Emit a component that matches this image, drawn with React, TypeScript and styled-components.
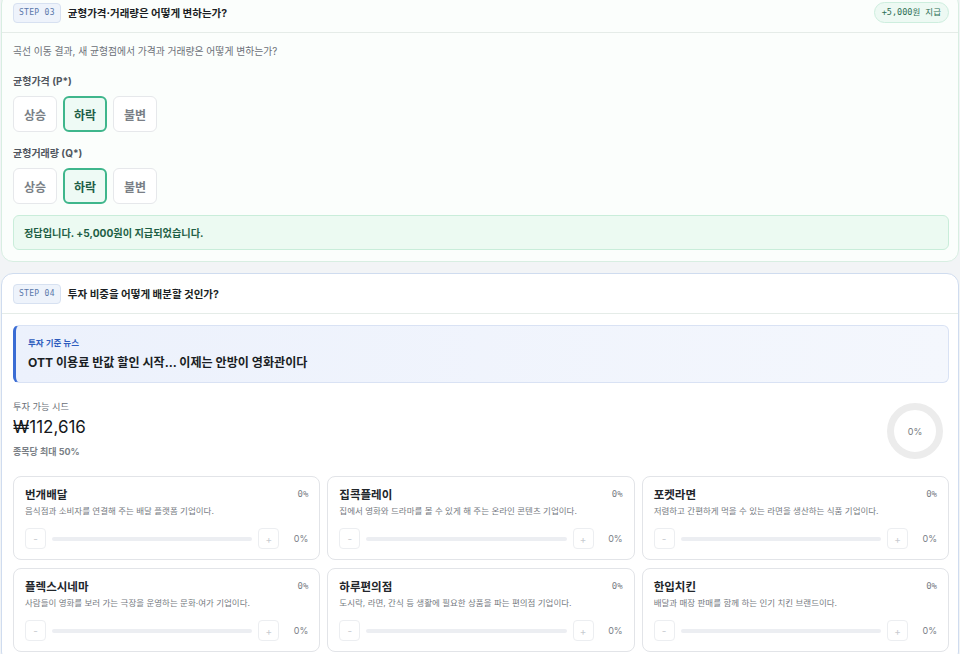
import styled, { createGlobalStyle, css } from "styled-components";

const GlobalStyle = createGlobalStyle`
  html { overflow: hidden; }
  body {
    margin: 0;
    background: #f2f4f6;
    font-family: Inter, "Noto Sans CJK KR", "Noto Sans", sans-serif;
    color: #1f2329;
  }
`;

const mono = `"DejaVu Sans Mono", "Liberation Mono", "Noto Sans CJK KR", monospace`;

const Page = styled.div`
  display: flex;
  flex-direction: column;
  gap: 11px;
  padding: 0 1px;
  margin-top: -8px;
`;

const Card = styled.section<{ $tone: "done" | "active" }>`
  border-radius: 12px;
  border: 1px solid;
  ${(p) =>
    p.$tone === "done"
      ? css`
          background: #fbfefc;
          border-color: #d8eee2;
        `
      : css`
          background: #ffffff;
          border-color: #cfdcef;
        `}
`;

const Header = styled.header`
  height: 40px;
  box-sizing: border-box;
  display: flex;
  align-items: center;
  gap: 7px;
  padding: 0 9px 0 11px;
  border-bottom: 1px solid #e5ece8;
`;

const StepBadge = styled.span`
  font-family: ${mono};
  font-size: 8px;
  letter-spacing: 0.3px;
  color: #5a78aa;
  background: #eef3fb;
  border: 1px solid #d7e1f1;
  border-radius: 4px;
  padding: 4px 5px;
  line-height: 10px;
`;

const Title = styled.h2`
  margin: 0;
  font-size: 10.5px;
  font-weight: 700;
  color: #1b1f24;
  flex: 1;
`;

const RewardPill = styled.span`
  font-family: ${mono};
  font-size: 8.5px;
  color: #2e6f55;
  background: #edf9f3;
  border: 1px solid #cdeede;
  border-radius: 999px;
  padding: 4px 7px;
  line-height: 11px;
`;

const Body = styled.div`
  padding: 11px 9px 11px 11px;
  display: flex;
  flex-direction: column;
`;

const Question = styled.p`
  margin: 0;
  font-size: 9.8px;
  line-height: 16px;
  color: #6b7078;
`;

const Field = styled.div`
  display: flex;
  flex-direction: column;
  gap: 8px;
  margin-top: 14px;
`;

const FieldLabel = styled.div`
  font-size: 10px;
  font-weight: 700;
  line-height: 14px;
  color: #50565e;
`;

const Choices = styled.div`
  display: flex;
  gap: 6px;
`;

const Choice = styled.button<{ $selected?: boolean }>`
  width: 44px;
  height: 36px;
  box-sizing: border-box;
  border-radius: 6px;
  font-family: inherit;
  font-size: 12px;
  font-weight: 600;
  padding: 0;
  background: #ffffff;
  border: 1px solid #e6e8eb;
  color: #7a7f86;
  ${(p) =>
    p.$selected &&
    css`
      background: #eefaf5;
      border: 2px solid #3fb68c;
      color: #1e5e45;
      font-weight: 700;
    `}
`;

const Notice = styled.div`
  margin-top: 11px;
  height: 35px;
  box-sizing: border-box;
  display: flex;
  align-items: center;
  padding: 0 10px;
  background: #ecfaf2;
  border: 1px solid #c9edda;
  border-radius: 6px;
  font-size: 10.2px;
  font-weight: 700;
  color: #1e5f45;
`;

const News = styled.div`
  height: 58px;
  box-sizing: border-box;
  display: flex;
  flex-direction: column;
  justify-content: center;
  gap: 6px;
  padding: 0 12px;
  background: linear-gradient(90deg, #ecf1fc, #f4f7fd);
  border: 1px solid #d9e2f4;
  border-left: 3px solid #3a6cd4;
  border-radius: 6px;
`;

const NewsLabel = styled.div`
  font-size: 8.5px;
  font-weight: 700;
  color: #2d5bbd;
  line-height: 11px;
`;

const Headline = styled.div`
  font-size: 12.1px;
  font-weight: 700;
  color: #1a1e24;
  line-height: 16px;
`;

const SeedRow = styled.div`
  display: flex;
  align-items: center;
  justify-content: space-between;
  margin-top: 17px;
  padding-right: 6px;
`;

const SeedInfo = styled.div`
  display: flex;
  flex-direction: column;
`;

const SeedLabel = styled.div`
  font-size: 9.2px;
  color: #6b7078;
  line-height: 12px;
`;

const SeedAmount = styled.div`
  font-size: 17px;
  color: #15181c;
  line-height: 22px;
  margin-top: 3px;
`;

const SeedLimit = styled.div`
  font-size: 9px;
  font-weight: 700;
  color: #7a7f86;
  line-height: 12px;
  margin-top: 8px;
`;

const Donut = styled.div`
  position: relative;
  width: 56px;
  height: 56px;
  display: grid;
  place-items: center;
  margin-top: 3px;
`;

const DonutLabel = styled.span`
  position: absolute;
  font-size: 9px;
  color: #777b80;
`;

const StockGrid = styled.div`
  display: grid;
  grid-template-columns: repeat(3, 1fr);
  gap: 8px 7px;
  margin-top: 17px;
`;

const Stock = styled.div`
  height: 84px;
  box-sizing: border-box;
  border: 1px solid #e2e4e8;
  border-radius: 8px;
  background: #ffffff;
  padding: 9px 11px 0 11px;
  display: flex;
  flex-direction: column;
`;

const StockTop = styled.div`
  display: flex;
  justify-content: space-between;
  align-items: center;
  height: 16px;
`;

const StockName = styled.div`
  font-size: 11.5px;
  font-weight: 700;
  color: #22262b;
`;

const StockPct = styled.span`
  font-family: ${mono};
  font-size: 9px;
  color: #7b8087;
`;

const StockDesc = styled.div`
  font-size: 8.5px;
  color: #767b82;
  line-height: 14px;
  margin-top: 2px;
`;

const SliderRow = styled.div`
  display: flex;
  align-items: center;
  margin-top: 10px;
`;

const StepButton = styled.button`
  width: 21px;
  height: 21px;
  padding: 0;
  box-sizing: border-box;
  border: 1px solid #eceef1;
  border-radius: 4px;
  background: #ffffff;
  color: #c8cbd0;
  font-size: 10px;
  font-family: Inter, sans-serif;
  line-height: 1;
`;

const Track = styled.div`
  flex: 1;
  height: 4px;
  border-radius: 2px;
  background: #eceef2;
  margin: 0 6px;
`;

const SliderValue = styled.span`
  width: 29px;
  text-align: right;
  font-size: 9px;
  color: #7b8087;
`;

const stocks = [
  { name: "번개배달", desc: "음식점과 소비자를 연결해 주는 배달 플랫폼 기업이다." },
  { name: "집콕플레이", desc: "집에서 영화와 드라마를 볼 수 있게 해 주는 온라인 콘텐츠 기업이다." },
  { name: "포켓라면", desc: "저렴하고 간편하게 먹을 수 있는 라면을 생산하는 식품 기업이다." },
  { name: "플렉스시네마", desc: "사람들이 영화를 보러 가는 극장을 운영하는 문화·여가 기업이다." },
  { name: "하루편의점", desc: "도시락, 라면, 간식 등 생활에 필요한 상품을 파는 편의점 기업이다." },
  { name: "한입치킨", desc: "배달과 매장 판매를 함께 하는 인기 치킨 브랜드이다." },
];

const options = ["상승", "하락", "불변"];

function ChoiceGroup({ label, picked }: { label: string; picked: string }) {
  return (
    <Field>
      <FieldLabel>{label}</FieldLabel>
      <Choices>
        {options.map((o) => (
          <Choice key={o} $selected={o === picked}>
            {o}
          </Choice>
        ))}
      </Choices>
    </Field>
  );
}

export default function App() {
  return (
    <>
      <GlobalStyle />
      <Page>
        <Card $tone="done">
          <Header>
            <StepBadge>STEP 03</StepBadge>
            <Title>균형가격·거래량은 어떻게 변하는가?</Title>
            <RewardPill>+5,000원 지급</RewardPill>
          </Header>
          <Body>
            <Question>곡선 이동 결과, 새 균형점에서 가격과 거래량은 어떻게 변하는가?</Question>
            <ChoiceGroup label="균형가격 (P*)" picked="하락" />
            <ChoiceGroup label="균형거래량 (Q*)" picked="하락" />
            <Notice>정답입니다. +5,000원이 지급되었습니다.</Notice>
          </Body>
        </Card>

        <Card $tone="active">
          <Header>
            <StepBadge>STEP 04</StepBadge>
            <Title>투자 비중을 어떻게 배분할 것인가?</Title>
          </Header>
          <Body>
            <News>
              <NewsLabel>투자 기준 뉴스</NewsLabel>
              <Headline>OTT 이용료 반값 할인 시작... 이제는 안방이 영화관이다</Headline>
            </News>
            <SeedRow>
              <SeedInfo>
                <SeedLabel>투자 가능 시드</SeedLabel>
                <SeedAmount>₩112,616</SeedAmount>
                <SeedLimit>종목당 최대 50%</SeedLimit>
              </SeedInfo>
              <Donut>
                <svg width="56" height="56" viewBox="0 0 56 56">
                  <circle cx="28" cy="28" r="24.5" fill="none" stroke="#ececec" strokeWidth="7" />
                </svg>
                <DonutLabel>0%</DonutLabel>
              </Donut>
            </SeedRow>
            <StockGrid>
              {stocks.map((s) => (
                <Stock key={s.name}>
                  <StockTop>
                    <StockName>{s.name}</StockName>
                    <StockPct>0%</StockPct>
                  </StockTop>
                  <StockDesc>{s.desc}</StockDesc>
                  <SliderRow>
                    <StepButton>-</StepButton>
                    <Track />
                    <StepButton>+</StepButton>
                    <SliderValue>0%</SliderValue>
                  </SliderRow>
                </Stock>
              ))}
            </StockGrid>
          </Body>
        </Card>
      </Page>
    </>
  );
}
